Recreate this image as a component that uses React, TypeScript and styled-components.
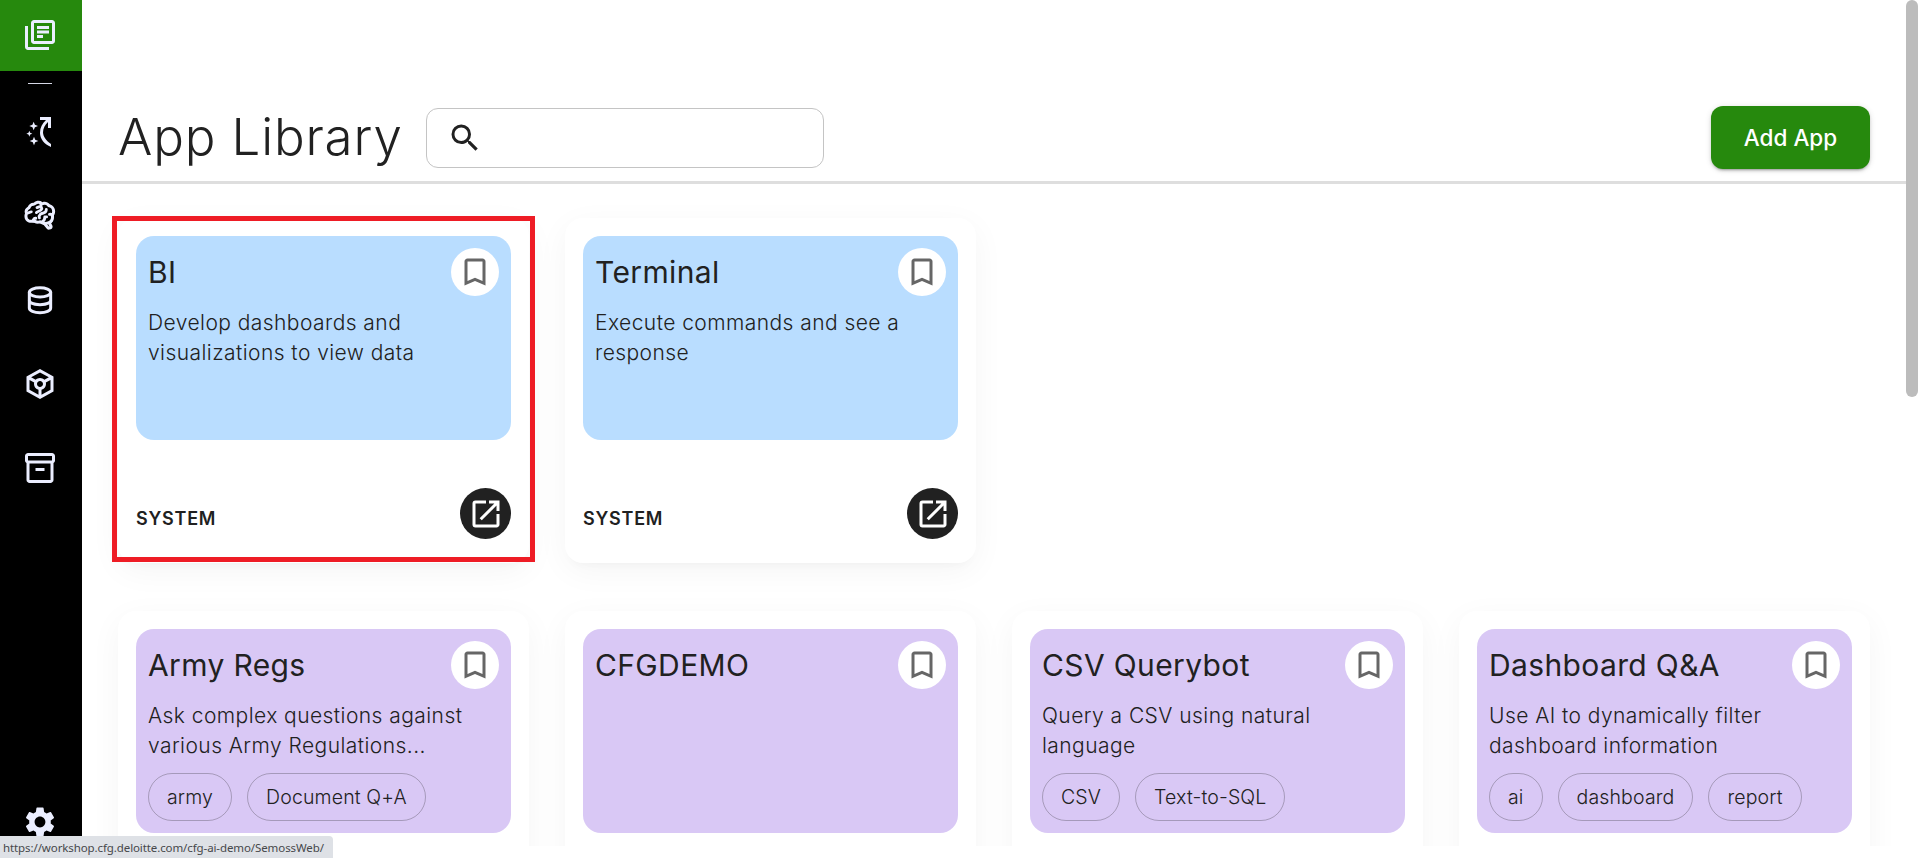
import React from "react";
import styled, { createGlobalStyle } from "styled-components";
import {
  MdBookmarkBorder,
  MdOpenInNew,
  MdOutlineInventory2,
  MdOutlineLibraryBooks,
  MdOutlineToken,
  MdSearch,
  MdSettings,
} from "react-icons/md";

const GlobalStyle = createGlobalStyle`
  * { box-sizing: border-box; }
  html, body { margin: 0; background: #fff; overflow: hidden; }
  body { font-family: Inter, "Liberation Sans", sans-serif; color: #212121; }
`;

const Page = styled.div`
  position: relative;
  display: flex;
  width: 1918px;
  height: 858px;
  overflow: hidden;
`;

const Sidebar = styled.nav`
  flex: none;
  width: 82px;
  height: 838px;
  background: #000;
  color: #ebeeff;
  display: flex;
  flex-direction: column;
`;

const NavItem = styled.a<{ $active?: boolean }>`
  flex: none;
  display: flex;
  align-items: center;
  height: ${(p) => (p.$active ? 71 : 84)}px;
  padding: 0 0 ${(p) => (p.$active ? 1 : 0)}px 22px;
  background: ${(p) => (p.$active ? "#26890d" : "transparent")};
  svg { width: 36px; height: 36px; display: block; }
`;

const NavDivider = styled.div`
  flex: none;
  width: 24px;
  height: 1px;
  margin: 12px 0 6px 28px;
  background: #d5d7e6;
`;

const NavSpacer = styled.div`
  flex: 1;
`;

const SettingsItem = styled(NavItem)`
  height: 36px;
  margin-bottom: -2px;
`;

const Main = styled.main`
  flex: none;
  width: 1824px;
  height: 846px;
  overflow: hidden;
  display: flex;
  flex-direction: column;
`;

const Header = styled.header`
  flex: none;
  display: flex;
  align-items: flex-start;
  height: 184px;
  padding: 106px 36px 0;
  border-bottom: 3px solid #dedede;
`;

const Title = styled.h1`
  margin: 0;
  width: 308px;
  font-size: 51px;
  font-weight: 300;
  line-height: 61px;
  letter-spacing: 0.85px;
  white-space: nowrap;
`;

const SearchBox = styled.label`
  display: flex;
  align-items: center;
  width: 398px;
  height: 60px;
  margin-top: 2px;
  padding-left: 20px;
  border: 1px solid #c4c4c4;
  border-radius: 12px;
  svg { width: 36px; height: 36px; }
`;

const AddButton = styled.button`
  width: 159px;
  height: 63px;
  margin-left: auto;
  border: 0;
  border-radius: 12px;
  background: #26890d;
  color: #fff;
  font: 500 22.5px Inter, sans-serif;
  padding: 0;
  box-shadow: 0 3px 2px -2px rgba(0, 0, 0, 0.2), 0 2px 3px rgba(0, 0, 0, 0.14), 0 1px 6px rgba(0, 0, 0, 0.12);
`;

const Content = styled.div`
  padding: 34px 36px 0;
  display: flex;
  flex-direction: column;
  gap: 48px;
`;

const CardRow = styled.section`
  display: grid;
  grid-template-columns: repeat(4, 411px);
  gap: 36px;
`;

const Card = styled.article`
  height: 345px;
  padding: 18px 18px 24px;
  border-radius: 18px;
  background: #fff;
  box-shadow: 0 8px 33px rgba(0, 0, 0, 0.045), 0 8px 10px -6px rgba(0, 0, 0, 0.03);
  display: flex;
  flex-direction: column;
  justify-content: space-between;
`;

const Tile = styled.div<{ $color: string }>`
  height: 204px;
  padding: 12px;
  border-radius: 18px;
  background: ${(p) => p.$color};
`;

const TileHead = styled.div`
  display: flex;
  justify-content: space-between;
`;

const CardTitle = styled.h2`
  margin: 0;
  font-size: 30px;
  font-weight: 400;
  line-height: 48px;
  letter-spacing: 0.37px;
`;

const BookmarkButton = styled.span`
  display: grid;
  place-items: center;
  width: 48px;
  height: 48px;
  border-radius: 50%;
  background: #fff;
  color: #666;
  svg { width: 36px; height: 36px; }
`;

const Description = styled.p`
  margin: 12px 0 0;
  height: 60px;
  width: 330px;
  font-size: 21px;
  font-weight: 300;
  line-height: 30px;
  letter-spacing: 0.44px;
`;

const Tags = styled.div`
  display: flex;
  gap: 15px;
  margin-top: 12px;
`;

const Tag = styled.span`
  height: 48px;
  padding: 0 18px;
  border: 1px solid rgba(33, 33, 33, 0.28);
  border-radius: 24px;
  font-size: 19.5px;
  font-weight: 300;
  line-height: 46px;
  letter-spacing: 0.14px;
  white-space: nowrap;
`;

const CardFoot = styled.div`
  display: flex;
  justify-content: space-between;
  align-items: center;
`;

const Owner = styled.span`
  margin-top: 11px;
  font-size: 18px;
  font-weight: 600;
  line-height: 24px;
  letter-spacing: 0.75px;
`;

const OpenButton = styled.span`
  display: grid;
  place-items: center;
  width: 51px;
  height: 51px;
  border-radius: 50%;
  background: #212121;
  color: #fff;
  svg { width: 36px; height: 36px; }
`;

const Highlight = styled.div`
  position: absolute;
  left: 112px;
  top: 216px;
  width: 423px;
  height: 346px;
  border: 5px solid #ee1c25;
`;

const ScrollTrack = styled.div`
  flex: none;
  width: 12px;
`;

const ScrollThumb = styled.div`
  height: 397px;
  background: #bcbcbc;
  border-radius: 6px;
`;

const StatusBar = styled.div`
  position: absolute;
  left: 0;
  top: 836px;
  width: 333px;
  height: 22px;
  padding-left: 3px;
  border-top-right-radius: 4px;
  background: #dee1e6;
  color: #46484b;
  font: 11.5px/23px "Noto Sans", sans-serif;
  letter-spacing: -0.1px;
  white-space: nowrap;
`;

const sparkle = (x: number, y: number, r: number) =>
  `M${x} ${y - r}L${x + r * 0.28} ${y - r * 0.28}L${x + r} ${y}L${x + r * 0.28} ${y + r * 0.28}L${x} ${y + r}L${x - r * 0.28} ${y + r * 0.28}L${x - r} ${y}L${x - r * 0.28} ${y - r * 0.28}Z`;

const GuideIcon = () => (
  <svg viewBox="0 0 108 108" fill="currentColor">
    <path d="M54 9H87V42H78V24C69 32 63 43 63 55C63 68 73 81 87 90V99C67 90 54 75 54 56C54 41 61 28 72 18H54Z" />
    <path d={sparkle(35, 36, 13)} />
    <path d={sparkle(22, 59, 9)} />
    <path d={sparkle(36, 81, 13)} />
  </svg>
);

const brainOutline =
  "M21.33 12.91C21.42 14.46 20.71 15.95 19.44 16.86L20.21 18.35C20.44 18.8 20.47 19.33 20.27 19.8C20.08 20.27 19.69 20.64 19.21 20.8L18.42 21.05C18.25 21.11 18.06 21.14 17.88 21.14C17.37 21.14 16.89 20.91 16.56 20.5L14.44 18C13.55 17.85 12.71 17.47 12 16.9C11.5 17.05 11 17.13 10.5 17.13C9.62 17.13 8.74 16.86 8 16.34C7.47 16.5 6.93 16.57 6.38 16.56C5.59 16.57 4.81 16.41 4.08 16.11C2.65 15.47 1.7 14.07 1.65 12.5C1.57 11.78 1.69 11.05 2 10.39C1.71 9.64 1.68 8.82 1.93 8.06C2.3 7.11 3 6.32 3.87 5.82C4.45 4.13 6.08 3 7.87 3.12C9.47 1.62 11.92 1.46 13.7 2.75C14.12 2.64 14.56 2.58 15 2.58C16.36 2.55 17.65 3.15 18.5 4.22C20.54 4.75 22 6.57 22.08 8.69C22.13 9.8 21.83 10.89 21.22 11.82C21.29 12.18 21.33 12.54 21.33 12.91Z";

const BrainIcon = () => (
  <svg viewBox="0 0 24 24" fill="none" stroke="currentColor" strokeLinecap="round" strokeLinejoin="round">
    <clipPath id="brain-clip">
      <path d={brainOutline} />
    </clipPath>
    <g clipPath="url(#brain-clip)">
      <path d={brainOutline} strokeWidth="4" />
      <path
        d="M4.2 9.9C4.8 9.7 5.3 9.2 6.2 9.2M8 16L7.6 14.4C8 13.7 8.6 13.4 9.2 13.5M12.6 3.6V5.4L10 6.4M12.6 5.4L13.2 7.2C12.8 8.6 10.8 8.7 9.6 9.7M12 16.4C14 15.9 15.2 14.4 15.2 12.6H16.4M11.6 13.2C11 11.2 12.6 10.3 14.2 10C15.6 9.7 16.2 8.8 16.2 7.6M18.3 10.9C19.5 10.7 20.6 11.3 21 12M14.6 16.9C17 17 19 16.4 19.8 15"
        strokeWidth="1.9"
      />
    </g>
  </svg>
);

const DatabaseIcon = () => (
  <svg viewBox="0 0 108 108" fill="none" stroke="currentColor" strokeWidth="9">
    <ellipse cx="54" cy="31" rx="32" ry="14" />
    <path d="M22 31V78C22 86 36 92 54 92S86 86 86 78V31" />
    <path d="M22 55C22 63 36 68 54 68S86 63 86 55" />
  </svg>
);

const BLUE = "#b9ddff";
const PURPLE = "#d9c8f5";

type App = { name: string; description?: string; tags?: string[]; color: string };

const systemApps: App[] = [
  { name: "BI", description: "Develop dashboards and visualizations to view data", color: BLUE },
  { name: "Terminal", description: "Execute commands and see a response", color: BLUE },
];

const userApps: App[] = [
  {
    name: "Army Regs",
    description: "Ask complex questions against various Army Regulations...",
    tags: ["army", "Document Q+A"],
    color: PURPLE,
  },
  { name: "CFGDEMO", color: PURPLE },
  {
    name: "CSV Querybot",
    description: "Query a CSV using natural language",
    tags: ["CSV", "Text-to-SQL"],
    color: PURPLE,
  },
  {
    name: "Dashboard Q&A",
    description: "Use AI to dynamically filter dashboard information",
    tags: ["ai", "dashboard", "report"],
    color: PURPLE,
  },
];

const AppCard = ({ app, owner }: { app: App; owner?: string }) => (
  <Card>
    <Tile $color={app.color}>
      <TileHead>
        <CardTitle>{app.name}</CardTitle>
        <BookmarkButton>
          <MdBookmarkBorder />
        </BookmarkButton>
      </TileHead>
      <Description>{app.description}</Description>
      {app.tags && (
        <Tags>
          {app.tags.map((tag) => (
            <Tag key={tag}>{tag}</Tag>
          ))}
        </Tags>
      )}
    </Tile>
    {owner && (
      <CardFoot>
        <Owner>{owner}</Owner>
        <OpenButton>
          <MdOpenInNew />
        </OpenButton>
      </CardFoot>
    )}
  </Card>
);

export default function App() {
  return (
    <Page>
      <GlobalStyle />
      <Sidebar>
        <NavItem $active>
          <MdOutlineLibraryBooks />
        </NavItem>
        <NavDivider />
        <NavItem>
          <GuideIcon />
        </NavItem>
        <NavItem>
          <BrainIcon />
        </NavItem>
        <NavItem>
          <DatabaseIcon />
        </NavItem>
        <NavItem>
          <MdOutlineToken />
        </NavItem>
        <NavItem>
          <MdOutlineInventory2 />
        </NavItem>
        <NavSpacer />
        <SettingsItem>
          <MdSettings />
        </SettingsItem>
      </Sidebar>
      <Main>
        <Header>
          <Title>App Library</Title>
          <SearchBox>
            <MdSearch />
          </SearchBox>
          <AddButton>Add App</AddButton>
        </Header>
        <Content>
          <CardRow>
            {systemApps.map((app) => (
              <AppCard key={app.name} app={app} owner="SYSTEM" />
            ))}
          </CardRow>
          <CardRow>
            {userApps.map((app) => (
              <AppCard key={app.name} app={app} />
            ))}
          </CardRow>
        </Content>
      </Main>
      <ScrollTrack>
        <ScrollThumb />
      </ScrollTrack>
      <Highlight />
      <StatusBar>https://workshop.cfg.deloitte.com/cfg-ai-demo/SemossWeb/</StatusBar>
    </Page>
  );
}
